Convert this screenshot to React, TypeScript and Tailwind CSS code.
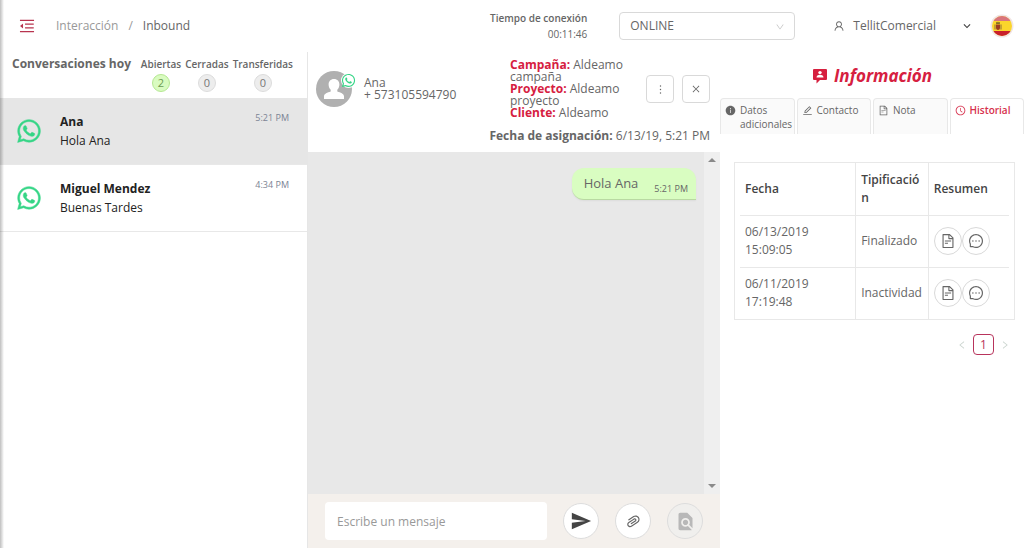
import React, { useState } from "react";
import {
  AiFillInfoCircle,
  AiOutlineClockCircle,
  AiOutlineClose,
  AiOutlineDown,
  AiOutlineEdit,
  AiOutlineFileText,
  AiOutlineLeft,
  AiOutlineMenuFold,
  AiOutlineMessage,
  AiOutlineMore,
  AiOutlinePaperClip,
  AiOutlineRight,
  AiOutlineUser,
} from "react-icons/ai";
import { FaWhatsapp } from "react-icons/fa";
import { MdFindInPage, MdKeyboardArrowDown, MdSend } from "react-icons/md";

const counters = [
  { label: "Abiertas", value: 2, style: "bg-[#d9fbc0] border-[#b5e892] text-[#6b9c50]" },
  { label: "Cerradas", value: 0, style: "bg-[#ededed] border-[#dcdcdc] text-[#777777]" },
  { label: "Transferidas", value: 0, style: "bg-[#ededed] border-[#dcdcdc] text-[#777777]" },
];

const conversations = [
  { id: 1, name: "Ana", message: "Hola Ana", time: "5:21 PM" },
  { id: 2, name: "Miguel Mendez", message: "Buenas Tardes", time: "4:34 PM" },
];

const details = [
  { label: "Campaña:", value: "Aldeamo campaña" },
  { label: "Proyecto:", value: "Aldeamo proyecto" },
  { label: "Cliente:", value: "Aldeamo" },
];

const tabs = [
  { id: "datos", label: "Datos adicionales", icon: AiFillInfoCircle },
  { id: "contacto", label: "Contacto", icon: AiOutlineEdit },
  { id: "nota", label: "Nota", icon: AiOutlineFileText },
  { id: "historial", label: "Historial", icon: AiOutlineClockCircle },
];

const history = [
  { date: "06/13/2019 15:09:05", type: "Finalizado" },
  { date: "06/11/2019 17:19:48", type: "Inactividad" },
];

const SpainFlag = () => (
  <svg viewBox="0 0 24 24" className="size-6" aria-hidden="true">
    <defs>
      <clipPath id="flag">
        <circle cx="12" cy="12" r="10" />
      </clipPath>
    </defs>
    <circle cx="12" cy="12" r="11.5" fill="#f1e6e4" />
    <g clipPath="url(#flag)">
      <rect width="24" height="24" fill="#fbd52b" />
      <rect width="24" height="7" fill="#d9747c" />
      <rect y="17" width="24" height="7" fill="#c8202c" />
      <path d="M4.500 10.500h1v5h-1zM10.500 10.500h1v5h-1z" fill="#8d6a3c" />
      <path d="M6 10.500h4v3.500a2 2 0 0 1-4 0z" fill="#9c3a22" />
      <path d="M6 9.800l.4-1.800 1 .7.600-1.200.6 1.200 1-.7.400 1.800z" fill="#5d4a24" />
    </g>
  </svg>
);

const ContactBubble = () => (
  <svg viewBox="0 0 16 16" className="size-4" aria-hidden="true">
    <path d="M2 1h12a1 1 0 0 1 1 1v9a1 1 0 0 1-1 1H8l-3.500 3.500V12H2a1 1 0 0 1-1-1V2a1 1 0 0 1 1-1z" fill="#d6203f" />
    <circle cx="8" cy="4.600" r="1.700" fill="#fff" />
    <path d="M4.500 9.500c0-2 2-2.700 3.500-2.700s3.500.7 3.500 2.700z" fill="#fff" />
  </svg>
);

const Avatar = () => (
  <div className="relative shrink-0">
    <svg viewBox="0 0 36 36" className="size-9" aria-hidden="true">
      <circle cx="18" cy="18" r="18" fill="#b0b0b0" />
      <path
        d="M18 8c3.400 0 5.400 2.400 5.400 5.600 0 2.200-.8 4-2.100 5.200v1.600c3.200 1 6.700 2.200 6.700 4.800V28H8v-2.800c0-2.600 3.500-3.800 6.700-4.800v-1.600c-1.300-1.200-2.100-3-2.100-5.200C12.600 10.400 14.600 8 18 8z"
        fill="#fff"
      />
    </svg>
    <span className="absolute -right-1 top-0.5 rounded-full bg-white">
      <FaWhatsapp size={15} className="text-[#35d586]" />
    </span>
  </div>
);

const Header = () => (
  <header className="flex h-[52px] shrink-0 items-center pl-[18px] pr-2.5">
    <button aria-label="Contraer menú" className="text-[#b8344f]">
      <AiOutlineMenuFold size={18} />
    </button>
    <nav className="ml-5 flex gap-2.5 text-[#999999]">
      <a href="#interaccion">Interacción</a>
      <span>/</span>
      <a href="#inbound" className="text-[#666666]">Inbound</a>
    </nav>
    <div className="ml-auto mr-8 text-right text-[10px] leading-4">
      <p className="font-semibold">Tiempo de conexión</p>
      <p>00:11:46</p>
    </div>
    <div className="relative">
      <select aria-label="Estado" className="h-7 w-44 appearance-none rounded border border-[#d9d9d9] bg-white px-2.5">
        <option>ONLINE</option>
      </select>
      <AiOutlineDown size={10} className="pointer-events-none absolute right-2.5 top-2.5 text-[#c4c4c4]" />
    </div>
    <button className="ml-[38px] flex items-center gap-2">
      <AiOutlineUser size={12} />
      TellitComercial
      <MdKeyboardArrowDown size={14} className="ml-4 text-[#444444]" />
    </button>
    <button aria-label="Idioma: español" className="ml-4">
      <SpainFlag />
    </button>
  </header>
);

const Sidebar = () => (
  <aside className="flex min-w-0 flex-col">
    <div className="flex h-[46px] justify-between pl-3 pr-3.5 pt-1">
      <h2 className="font-bold">Conversaciones hoy</h2>
      <div className="flex gap-1">
        {counters.map((counter) => (
          <div key={counter.label} className="flex flex-col items-center gap-0.5 text-[10px] leading-4 font-semibold">
            {counter.label}
            <span className={`flex size-[18px] items-center justify-center rounded-full border text-[11px] font-normal ${counter.style}`}>
              {counter.value}
            </span>
          </div>
        ))}
      </div>
    </div>
    <ul>
      {conversations.map((item, index) => (
        <li key={item.id} className={`border-b border-[#e8e8e8] ${index === 0 ? "bg-[#e6e6e6]" : "bg-white"}`}>
          <button className="flex h-[66px] w-full items-center pl-4 pr-[18px] text-left text-[#222222]">
            <FaWhatsapp size={26} className="shrink-0 text-[#35d586]" stroke="currentColor" strokeWidth={10} />
            <span className="ml-[18px] flex-1 leading-[19px]">
              <span className="block font-bold">{item.name}</span>
              <span className="block">{item.message}</span>
            </span>
            <span className="mt-3 self-start text-[9px] leading-4 text-[#7b8494]">{item.time}</span>
          </button>
        </li>
      ))}
    </ul>
  </aside>
);

const Chat = () => (
  <main className="flex min-w-0 flex-col border-l border-[#e6e6e6]">
    <div className="h-[100px] shrink-0 pl-2 pr-2.5 pt-1.5">
      <div className="flex h-[62px] items-center">
        <Avatar />
        <div className="ml-3 leading-3">
          <p>Ana</p>
          <p>+ 573105594790</p>
        </div>
        <dl className="ml-auto w-[120px] leading-3">
          {details.map((detail) => (
            <div key={detail.label}>
              <dt className="inline font-bold text-[#d6203f]">{detail.label}</dt>{" "}
              <dd className="inline">{detail.value}</dd>
            </div>
          ))}
        </dl>
        <div className="ml-4 flex gap-2">
          <button aria-label="Más opciones" className="flex size-7 items-center justify-center rounded border border-[#d9d9d9]">
            <AiOutlineMore size={13} />
          </button>
          <button aria-label="Cerrar" className="flex size-7 items-center justify-center rounded border border-[#d9d9d9]">
            <AiOutlineClose size={10} />
          </button>
        </div>
      </div>
      <p className="mt-2 text-right leading-4">
        <b>Fecha de asignación:</b> 6/13/19, 5:21 PM
      </p>
    </div>
    <div className="flex min-h-0 flex-1 bg-[#e8e8e8]">
      <div className="flex-1 pr-2 pt-4">
        <div className="ml-auto flex h-8 w-fit items-center gap-4 rounded-xl rounded-br-none border-b border-[#b9d9a2] bg-[#d9fdc1] pl-3 pr-2 shadow-xs">
          <span className="text-[13px]">Hola Ana</span>
          <span className="mt-2.5 text-[9px]">5:21 PM</span>
        </div>
      </div>
      {/* scroll track */}
      <div className="flex w-4 flex-col items-center justify-between bg-[#efefef] py-1.5 text-[#8a8a8a]">
        <svg viewBox="0 0 8 4" className="h-1 w-2"><path d="M4 0l4 4H0z" fill="currentColor" /></svg>
        <svg viewBox="0 0 8 4" className="h-1 w-2"><path d="M0 0h8L4 4z" fill="currentColor" /></svg>
      </div>
    </div>
    <form className="flex h-[54px] shrink-0 items-center gap-4 bg-[#f4f0ec] px-[17px]" onSubmit={(e) => e.preventDefault()}>
      <input
        type="text"
        aria-label="Mensaje"
        placeholder="Escribe un mensaje"
        className="h-[38px] min-w-0 flex-1 rounded bg-white px-3 placeholder:text-[#999999]"
      />
      <button aria-label="Enviar" className="flex size-9 items-center justify-center rounded-full border border-[#dddddd] bg-white text-[#444444]">
        <MdSend size={22} />
      </button>
      <button type="button" aria-label="Adjuntar" className="flex size-9 items-center justify-center rounded-full border border-[#dddddd] bg-white">
        <AiOutlinePaperClip size={17} className="rotate-12" />
      </button>
      <button type="button" aria-label="Buscar plantilla" className="flex size-9 items-center justify-center rounded-full border border-[#dddddd] bg-[#f0efed] text-[#b8b8b8]">
        <MdFindInPage size={21} />
      </button>
    </form>
  </main>
);

const InfoPanel = () => {
  const [active, setActive] = useState("historial");

  return (
    <section className="min-w-0 pt-3">
      <h2 className="flex items-center justify-center gap-1.5 text-[17px] leading-6 font-bold italic text-[#d6203f]">
        <ContactBubble />
        Información
      </h2>
      <div role="tablist" className="mt-2.5 grid grid-cols-4 gap-0.5">
        {tabs.map(({ id, label, icon: Icon }) => (
          <button
            key={id}
            role="tab"
            aria-selected={active === id}
            onClick={() => setActive(id)}
            className={`flex h-9 items-start gap-1 rounded-t border border-b-0 border-[#e8e8e8] pl-1 pt-1 text-left text-[10px] leading-[14px] ${
              active === id ? "bg-white font-semibold text-[#d6304c]" : "bg-[#fafafa]"
            }`}
          >
            <Icon size={11} className="mt-0.5 shrink-0" />
            {label}
          </button>
        ))}
      </div>
      <div className="ml-3.5 mr-[9px] mt-7 border border-[#e8e8e8] px-[5px]">
        <table className="w-full table-fixed text-left leading-[18px]">
          <thead>
            <tr className="h-[52px] border-b border-[#e8e8e8] text-[#444444]">
              <th className="w-[43%] border-r border-[#e8e8e8] px-[5px] font-semibold">Fecha</th>
              <th className="w-[27%] border-r border-[#e8e8e8] px-[5px] font-semibold break-words">Tipificación</th>
              <th className="px-[5px] font-semibold">Resumen</th>
            </tr>
          </thead>
          <tbody>
            {history.map((row) => (
              <tr key={row.date} className="h-[52px] border-b border-[#e8e8e8] last:border-b-0">
                <td className="border-r border-[#e8e8e8] px-[5px]">{row.date}</td>
                <td className="border-r border-[#e8e8e8] px-[5px]">{row.type}</td>
                <td className="px-[5px]">
                  <div className="flex">
                    <button aria-label="Ver nota" className="flex size-7 items-center justify-center rounded-full border border-[#d9d9d9]">
                      <AiOutlineFileText size={16} />
                    </button>
                    <button aria-label="Ver mensajes" className="flex size-7 items-center justify-center rounded-full border border-[#d9d9d9]">
                      <AiOutlineMessage size={16} />
                    </button>
                  </div>
                </td>
              </tr>
            ))}
          </tbody>
        </table>
      </div>
      <nav aria-label="Paginación" className="mr-3.5 mt-3.5 flex items-center justify-end gap-1.5 text-[#c9d3cd]">
        <button aria-label="Anterior"><AiOutlineLeft size={10} /></button>
        <button aria-current="page" className="size-[21px] rounded border border-[#b8345c] text-[#b8345c]">1</button>
        <button aria-label="Siguiente"><AiOutlineRight size={10} /></button>
      </nav>
    </section>
  );
};

const App = () => {
  return (
    <div className="relative flex h-screen flex-col bg-white font-['Open_Sans','Noto_Sans',sans-serif] text-xs text-[#666666]">
      <Header />
      <div className="grid min-h-0 flex-1 grid-cols-[307fr_413fr_304fr]">
        <Sidebar />
        <Chat />
        <InfoPanel />
      </div>
      {/* shadow of the collapsed menu */}
      <div className="pointer-events-none absolute inset-y-0 left-0 w-1 bg-gradient-to-r from-black/25 to-transparent" />
    </div>
  );
};

export default App;
